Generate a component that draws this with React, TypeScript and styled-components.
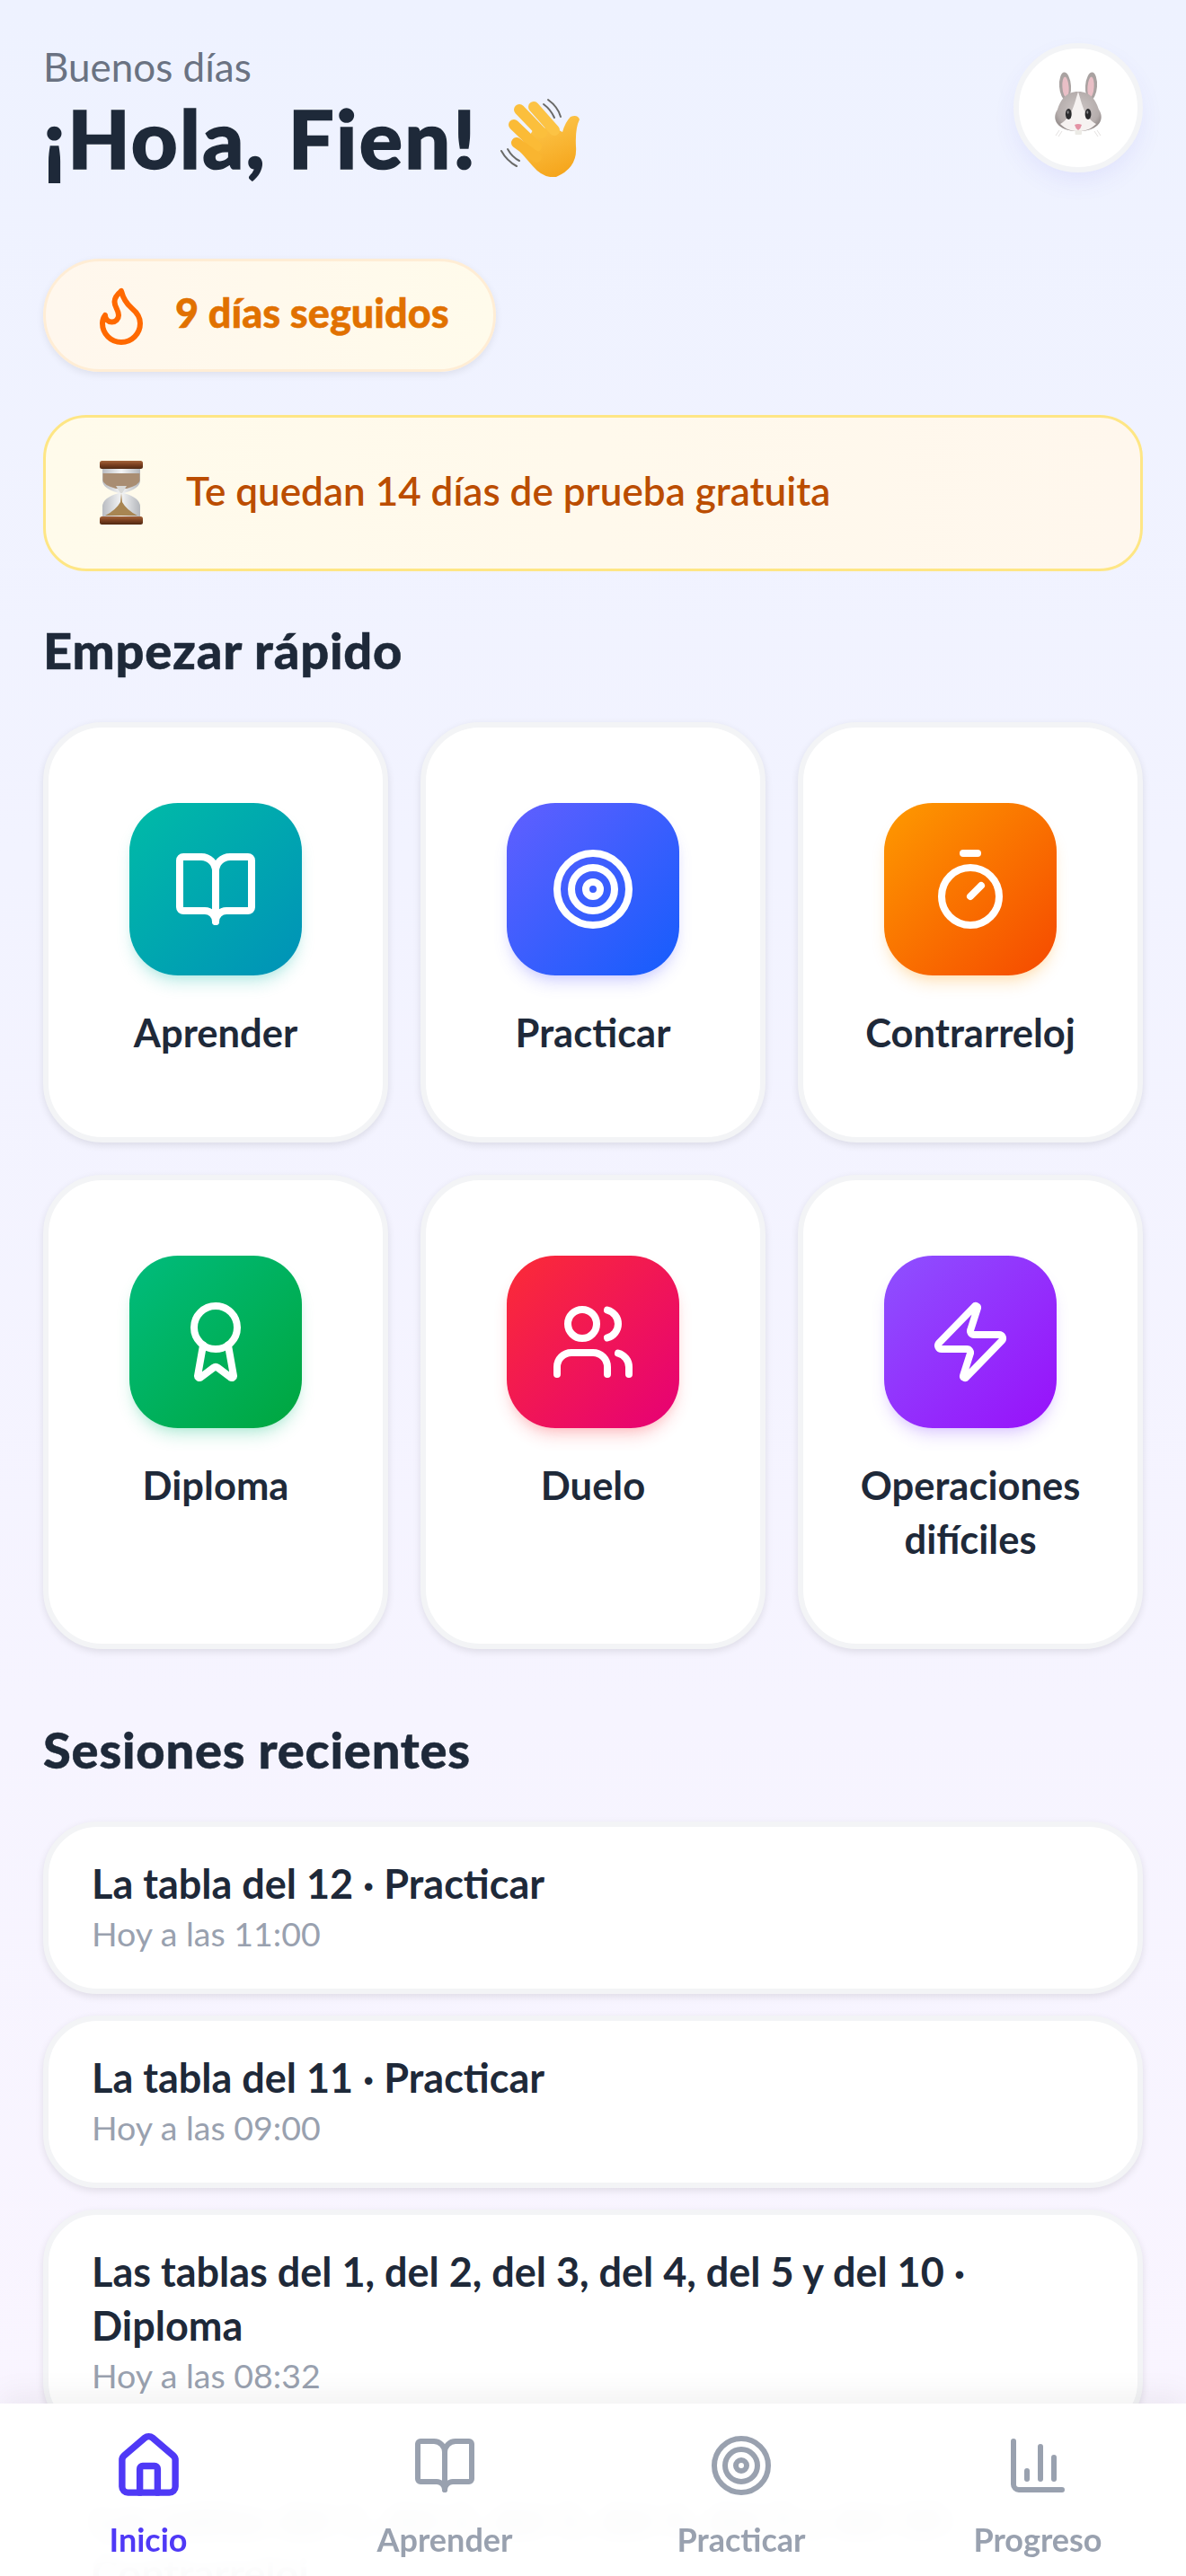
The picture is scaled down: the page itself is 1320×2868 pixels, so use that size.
import React from "react";
import styled, { createGlobalStyle } from "styled-components";
import {
  Award,
  BookOpen,
  ChartColumn,
  Flame,
  House,
  Target,
  Timer,
  Users,
  Zap,
} from "lucide-react";

const FONT = `"Lato", "Noto Sans", sans-serif`;

const GlobalStyle = createGlobalStyle`
  html, body {
    margin: 0;
    height: 100%;
    overflow: hidden;
  }
  body {
    font-family: ${FONT};
    color: #1e2939;
  }
`;

const quickActions = [
  { label: "Aprender", icon: BookOpen, from: "#00bba7", to: "#0092b8", glow: "rgba(0,187,167,.2)" },
  { label: "Practicar", icon: Target, from: "#615fff", to: "#155dfc", glow: "rgba(97,95,255,.2)" },
  { label: "Contrarreloj", icon: Timer, from: "#fe9a00", to: "#f54900", glow: "rgba(254,154,0,.2)" },
  { label: "Diploma", icon: Award, from: "#00bc7d", to: "#00a63e", glow: "rgba(0,188,125,.2)" },
  { label: "Duelo", icon: Users, from: "#fb2c36", to: "#e60076", glow: "rgba(251,44,54,.2)" },
  { label: "Operaciones difíciles", icon: Zap, from: "#8e51ff", to: "#9810fa", glow: "rgba(142,81,255,.2)" },
];

const sessions = [
  { title: "La tabla del 12 · Practicar", time: "Hoy a las 11:00" },
  { title: "La tabla del 11 · Practicar", time: "Hoy a las 09:00" },
  { title: "Las tablas del 1, del 2, del 3, del 4, del 5 y del 10 · Diploma", time: "Hoy a las 08:32" },
  { title: "Las tablas del 1, del 2, del 3, del 4, del 5 y del 10 · Contrarreloj", time: "Ayer a las 19:10" },
];

const navItems = [
  { label: "Inicio", icon: House, active: true },
  { label: "Aprender", icon: BookOpen, active: false },
  { label: "Practicar", icon: Target, active: false },
  { label: "Progreso", icon: ChartColumn, active: false },
];

const WaveEmoji: React.FC = () => (
  <WaveSvg viewBox="0 0 88 88" aria-hidden="true">
    <defs>
      <linearGradient id="handFill" x1="0.2" y1="0" x2="0.6" y2="1">
        <stop offset="0" stopColor="#fdc94f" />
        <stop offset="1" stopColor="#f5a51c" />
      </linearGradient>
    </defs>
    <g fill="none" stroke="#6a6a68" strokeWidth="2" strokeLinecap="round">
      <path d="M53 2Q64 10 67 21" />
      <path d="M48 7Q56 13 60 22" />
      <path d="M1 59Q7 70 18 76" />
      <path d="M8 57Q13 66 21 70" />
    </g>
    <path
      d="M36 36L58 32L69 38Q72 27 78 21Q86 18 88 24Q83 34 84 54Q86 78 62 88Q48 90 36 76L22 60Z"
      fill="url(#handFill)"
    />
    <g strokeWidth="12" strokeLinecap="round">
      <path d="M21 13L46 39" stroke="#fbbf3c" />
      <path d="M37 10L60 36" stroke="#fcc344" />
      <path d="M15 30L40 54" stroke="#fbbb36" />
      <path d="M18 50L40 66" stroke="#f9b530" />
    </g>
  </WaveSvg>
);

const HourglassEmoji: React.FC = () => (
  <svg width="48" height="72" viewBox="0 0 48 72" aria-hidden="true">
    <defs>
      <linearGradient id="woodFill" x1="0" y1="0" x2="0" y2="1">
        <stop offset="0" stopColor="#a4633a" />
        <stop offset="0.5" stopColor="#7a4020" />
        <stop offset="1" stopColor="#4f2812" />
      </linearGradient>
      <linearGradient id="glassFill" x1="0" y1="0" x2="1" y2="0">
        <stop offset="0" stopColor="#b9bcc1" />
        <stop offset="0.5" stopColor="#f4f5f6" />
        <stop offset="1" stopColor="#b4b7bc" />
      </linearGradient>
    </defs>
    <path d="M3 9H45V22Q45 31 26.5 36Q45 41 45 51V62H3V51Q3 41 21.5 36Q3 31 3 22Z" fill="url(#glassFill)" />
    <path d="M3.5 14H44.5V22Q44 27 30 31H18Q4 27 3.5 22Z" fill="#a98d72" />
    <path d="M18 28H30L25 36H23Z" fill="#d9d9d7" />
    <path d="M24 36L25 46Q30 55 42 61H6Q18 55 23 46Z" fill="#a88552" />
    <rect x="0" y="0" width="48" height="9" rx="2.5" fill="url(#woodFill)" />
    <rect x="0" y="62" width="48" height="9" rx="2.5" fill="url(#woodFill)" />
  </svg>
);

const BunnyEmoji: React.FC = () => (
  <svg width="60" height="80" viewBox="0 0 60 80" aria-hidden="true">
    <defs>
      <radialGradient id="bunnyHead" cx="0.5" cy="0.45" r="0.6">
        <stop offset="0" stopColor="#cdc6c5" />
        <stop offset="0.75" stopColor="#b5adac" />
        <stop offset="1" stopColor="#8f8786" />
      </radialGradient>
    </defs>
    <ellipse cx="15.5" cy="16" rx="6.5" ry="15.5" fill="#a9a2a1" transform="rotate(-4 15.5 16)" />
    <ellipse cx="44.5" cy="16" rx="6.5" ry="15.5" fill="#a9a2a1" transform="rotate(4 44.5 16)" />
    <ellipse cx="16" cy="17" rx="3.6" ry="11.5" fill="#e9bfc6" transform="rotate(-4 16 17)" />
    <ellipse cx="44" cy="17" rx="3.6" ry="11.5" fill="#e9bfc6" transform="rotate(4 44 17)" />
    <path d="M30 22C44 22 50 32 53 42C60 52 54 66 30 66C6 66 0 52 7 42C10 32 16 22 30 22Z" fill="url(#bunnyHead)" />
    <path d="M30 22C34 34 36 50 50 58C44 64 38 66 30 66C22 66 16 64 10 58C24 50 26 34 30 22Z" fill="#f6f2f1" />
    <ellipse cx="19.3" cy="47" rx="3.4" ry="6" fill="#2b2b2d" />
    <ellipse cx="41" cy="47" rx="3.4" ry="6" fill="#2b2b2d" />
    <ellipse cx="18.6" cy="45" rx="1" ry="1.8" fill="#8a8a8c" />
    <ellipse cx="40.3" cy="45" rx="1" ry="1.8" fill="#8a8a8c" />
    <path d="M26 59Q30 57 34 59Q33 63 30 65Q27 63 26 59Z" fill="#e392a4" />
    <rect x="26.5" y="65" width="7.5" height="5" rx="1" fill="#ecebe6" />
    <g stroke="#d8d4d3" strokeWidth="0.7" fill="none">
      <path d="M9 65L5 71" />
      <path d="M12 66L8 72" />
      <path d="M51 65L55 71" />
      <path d="M48 66L52 72" />
    </g>
  </svg>
);

const App: React.FC = () => {
  return (
    <Screen>
      <GlobalStyle />
      <Scroller>
        <Header>
          <div>
            <Greeting>Buenos días</Greeting>
            <Title>
              ¡Hola, Fien!
              <WaveEmoji />
            </Title>
          </div>
          <Avatar>
            <BunnyEmoji />
          </Avatar>
        </Header>

        <StreakPill>
          <Flame size={72} color="#ff6900" strokeWidth={2} />
          <StreakText>9 días seguidos</StreakText>
        </StreakPill>

        <TrialBanner>
          <HourglassEmoji />
          <TrialText>Te quedan 14 días de prueba gratuita</TrialText>
        </TrialBanner>

        <SectionTitle>Empezar rápido</SectionTitle>
        <ActionGrid>
          {quickActions.map((item) => (
            <ActionCard key={item.label}>
              <ActionTile $from={item.from} $to={item.to} $glow={item.glow}>
                <item.icon size={96} color="#ffffff" strokeWidth={2} />
              </ActionTile>
              <ActionLabel>{item.label}</ActionLabel>
            </ActionCard>
          ))}
        </ActionGrid>

        <SectionTitle $spaced>Sesiones recientes</SectionTitle>
        <SessionList>
          {sessions.map((session) => (
            <SessionCard key={session.title}>
              <SessionTitle>{session.title}</SessionTitle>
              <SessionTime>{session.time}</SessionTime>
            </SessionCard>
          ))}
        </SessionList>
      </Scroller>

      <BottomNav>
        {navItems.map((item) => (
          <NavItem key={item.label} $active={item.active}>
            <NavIconBox>
              <item.icon size={item.active ? 79 : 72} strokeWidth={item.active ? 2.25 : 2} />
            </NavIconBox>
            <NavLabel>{item.label}</NavLabel>
          </NavItem>
        ))}
      </BottomNav>
    </Screen>
  );
};

const Screen = styled.div`
  position: relative;
  height: 2868px;
  overflow: hidden;
  background: linear-gradient(180deg, #eef2ff 0%, #faf5ff 100%);
`;

const Scroller = styled.main`
  padding: 48px 48px 0;
`;

const Header = styled.header`
  display: flex;
  justify-content: space-between;
  align-items: flex-start;
  height: 144px;
  margin-bottom: 96px;
`;

const Greeting = styled.div`
  margin-bottom: 2px;
  font-size: 44px;
  line-height: 52px;
  color: #6a7282;
`;

const Title = styled.h1`
  display: flex;
  align-items: center;
  margin: 0;
  font-size: 90px;
  line-height: 102px;
  font-weight: 900;
  letter-spacing: 2.3px;
  -webkit-text-stroke: 1.5px #1e2939;
  color: #1e2939;
`;

const WaveSvg = styled.svg`
  flex: none;
  width: 88px;
  height: 88px;
  margin-left: 25px;
`;

const Avatar = styled.div`
  display: flex;
  align-items: center;
  justify-content: center;
  box-sizing: border-box;
  width: 144px;
  height: 144px;
  border: 6px solid #f3f4f6;
  border-radius: 50%;
  background: #ffffff;
  box-shadow: 0 12px 30px -6px rgba(79, 70, 229, 0.1);
`;

const StreakPill = styled.div`
  display: inline-flex;
  align-items: center;
  gap: 24px;
  box-sizing: border-box;
  height: 126px;
  padding: 0 49px 0 48px;
  border: 3px solid #ffedd5;
  border-radius: 63px;
  background: linear-gradient(90deg, #fff7ed, #fffbeb);
  box-shadow: 0 3px 9px rgba(0, 0, 0, 0.08);
`;

const StreakText = styled.span`
  padding-bottom: 7px;
  font-size: 45px;
  font-weight: 900;
  -webkit-text-stroke: 0.5px #e17100;
  color: #e17100;
`;

const TrialBanner = styled.div`
  display: flex;
  align-items: center;
  gap: 48px;
  box-sizing: border-box;
  height: 174px;
  margin-top: 48px;
  padding: 0 60px;
  border: 3px solid #fee685;
  border-radius: 48px;
  background: linear-gradient(90deg, #fffbeb, #fff7ed);
`;

const TrialText = styled.span`
  padding-bottom: 7px;
  font-size: 44px;
  font-weight: 600;
  color: #bb4d00;
`;

const SectionTitle = styled.h2<{ $spaced?: boolean }>`
  margin: ${(p) => (p.$spaced ? "70px" : "46px")} 0 38px;
  font-size: 56px;
  line-height: 84px;
  font-weight: 900;
  letter-spacing: 0.8px;
  -webkit-text-stroke: 0.5px #1e2939;
  color: #1e2939;
`;

const ActionGrid = styled.div`
  display: grid;
  grid-template-columns: repeat(3, 1fr);
  gap: 36px;
`;

const ActionCard = styled.div`
  display: flex;
  flex-direction: column;
  align-items: center;
  gap: 33px;
  box-sizing: border-box;
  padding: 84px 24px 87px;
  border: 6px solid #f3f4f6;
  border-radius: 66px;
  background: #ffffff;
  box-shadow: 0 3px 9px rgba(0, 0, 0, 0.1);
`;

const ActionTile = styled.div<{ $from: string; $to: string; $glow: string }>`
  display: flex;
  align-items: center;
  justify-content: center;
  width: 192px;
  height: 192px;
  border-radius: 54px;
  background: linear-gradient(135deg, ${(p) => p.$from}, ${(p) => p.$to});
  box-shadow: 0 12px 18px -3px ${(p) => p.$glow}, 0 6px 12px -6px ${(p) => p.$glow};
`;

const ActionLabel = styled.div`
  font-size: 43.5px;
  line-height: 60px;
  font-weight: 700;
  text-align: center;
  color: #1e2939;
`;

const SessionList = styled.div`
  display: flex;
  flex-direction: column;
  gap: 24px;
`;

const SessionCard = styled.div`
  box-sizing: border-box;
  padding: 33px 48px 40px;
  border: 6px solid #f3f4f6;
  border-radius: 60px;
  background: #ffffff;
  box-shadow: 0 3px 9px rgba(0, 0, 0, 0.1);
`;

const SessionTitle = styled.div`
  font-size: 45px;
  line-height: 60px;
  font-weight: 700;
  color: #1e2939;
`;

const SessionTime = styled.div`
  margin-top: 5px;
  font-size: 37.5px;
  line-height: 42px;
  color: #99a1af;
`;

const BottomNav = styled.nav`
  position: absolute;
  left: 0;
  right: 0;
  bottom: 0;
  display: grid;
  grid-template-columns: repeat(4, 1fr);
  height: 192px;
  background: rgba(255, 255, 255, 0.97);
  backdrop-filter: blur(12px);
  box-shadow: 0 -12px 30px rgba(0, 0, 0, 0.05);
`;

const NavItem = styled.div<{ $active: boolean }>`
  display: flex;
  flex-direction: column;
  align-items: center;
  padding-top: 33px;
  color: ${(p) => (p.$active ? "#4f39f6" : "#99a1af")};
`;

const NavIconBox = styled.div`
  display: flex;
  align-items: center;
  justify-content: center;
  height: 72px;
`;

const NavLabel = styled.div`
  margin-top: 22px;
  font-size: 36px;
  line-height: 48px;
  font-weight: 700;
`;

export default App;
